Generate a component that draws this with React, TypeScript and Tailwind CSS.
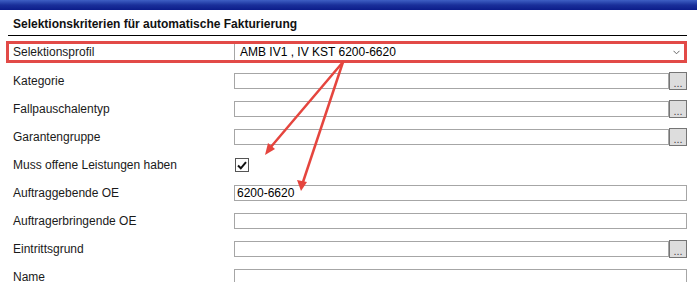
import React from "react";

const font = { fontFamily: '"Liberation Sans", Arial, sans-serif' };

function TextInput({ value, button }: { value?: string; button?: boolean }) {
  return (
    <div className="flex items-center">
      <div
        className={`h-[16px] border border-[#a6a6a6] bg-white flex items-center pl-[2px] text-[12px] text-black ${
          button ? "w-[435px]" : "w-[453px]"
        }`}
      >
        {value}
      </div>
      {button && (
        <div className="w-[18px] h-[18px] border border-[#757575] bg-[#dddddd] flex items-end justify-center pb-[1px] text-[11px] leading-[10px] text-[#444]">
          ...
        </div>
      )}
    </div>
  );
}

function Row({ label, children }: { label: string; children: React.ReactNode }) {
  return (
    <div className="flex items-center h-[28px]">
      <div className="w-[221px] text-[12px] text-[#1a1a1a]">{label}</div>
      {children}
    </div>
  );
}

export default function App() {
  return (
    <div className="relative w-[697px] h-[282px] overflow-hidden bg-white" style={font}>
      <div className="h-[10px] bg-gradient-to-b from-[#3f5fc4] via-[#1a2f9a] to-[#0c1c8a]" />
      <div className="h-[25px] pl-[13px] flex items-center pt-[3px] text-[12px] font-bold text-[#111]">
        Selektionskriterien für automatische Fakturierung
      </div>
      <div className="ml-[8px] w-[679px] h-px bg-black" />
      <div className="ml-[6px] mt-[5px] w-[681px] h-[22px] border-[3px] border-[#e24a47] flex items-center">
        <div className="w-[225px] pl-[4px] text-[12px] text-[#1a1a1a]">Selektionsprofil</div>
        <div className="flex-1 h-full border-l border-[#a6a6a6] flex items-center pl-[5px] pr-[4px] text-[12px] text-black">
          <span className="flex-1">AMB IV1 , IV KST 6200-6620</span>
          <svg width="7" height="5" viewBox="0 0 7 5" className="mt-[1px]">
            <polyline points="0.5,0.8 3.5,3.8 6.5,0.8" fill="none" stroke="#666" strokeWidth="1" />
          </svg>
        </div>
      </div>
      <div className="mt-[4px] pl-[13px]">
        <Row label="Kategorie">
          <TextInput button />
        </Row>
        <Row label="Fallpauschalentyp">
          <TextInput button />
        </Row>
        <Row label="Garantengruppe">
          <TextInput button />
        </Row>
        <Row label="Muss offene Leistungen haben">
          <div className="ml-[1px] w-[14px] h-[14px] border border-[#555] bg-white flex items-center justify-center">
            <svg width="10" height="9" viewBox="0 0 10 9">
              <polyline points="1,4.5 3.8,7.3 9,1.2" fill="none" stroke="#111" strokeWidth="2" />
            </svg>
          </div>
        </Row>
        <Row label="Auftraggebende OE">
          <TextInput value="6200-6620" />
        </Row>
        <Row label="Auftragerbringende OE">
          <TextInput />
        </Row>
        <Row label="Eintrittsgrund">
          <TextInput button />
        </Row>
        <Row label="Name">
          <TextInput />
        </Row>
      </div>
      <svg className="absolute left-0 top-0 pointer-events-none" width="697" height="282">
        <line x1="343" y1="62" x2="270" y2="148" stroke="#e5453e" strokeWidth="2.5" strokeLinecap="round" />
        <polygon points="265,155 268,143 275,149" fill="#e5453e" />
        <line x1="343" y1="62" x2="303" y2="182" stroke="#e5453e" strokeWidth="2.5" strokeLinecap="round" />
        <polygon points="301,191 297,180 307,182" fill="#e5453e" />
      </svg>
    </div>
  );
}
